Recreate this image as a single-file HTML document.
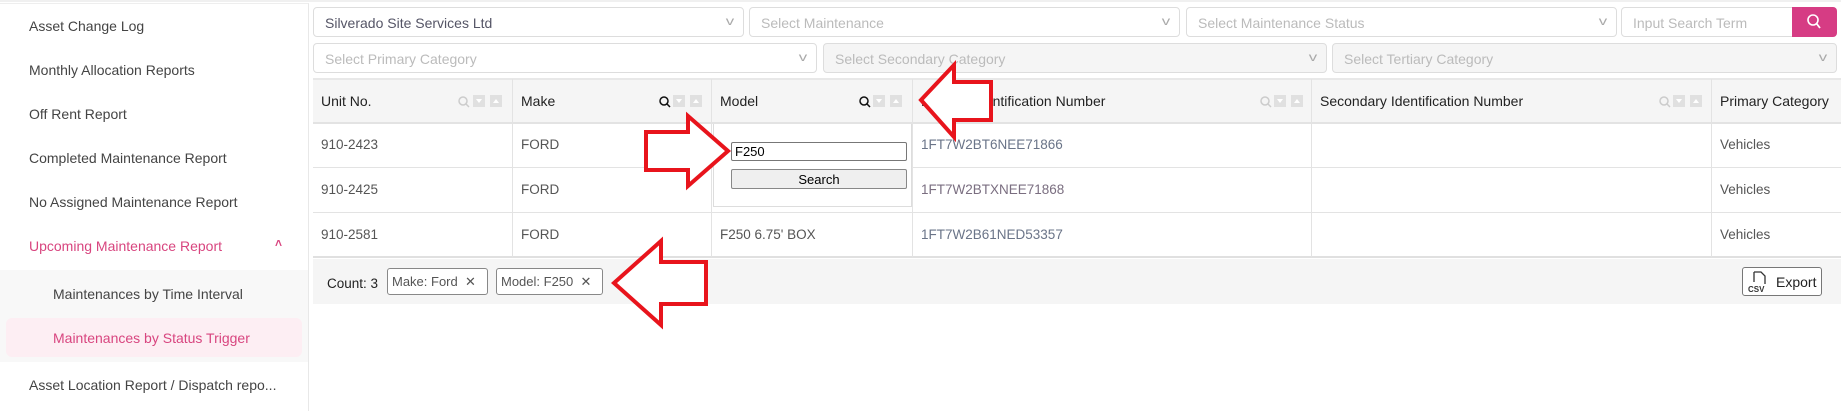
<!DOCTYPE html>
<html><head><meta charset="utf-8"><style>
*{box-sizing:border-box;margin:0;padding:0}
body{width:1841px;height:411px;overflow:hidden;background:#fff;font-family:"Liberation Sans",sans-serif;font-size:14px;color:#333;position:relative}
.a{position:absolute}
.side{left:0;top:3px;width:309px;height:408px;border-right:1px solid #e8e8e8;border-top:1px solid #eee}
.si{position:absolute;left:29px;font-size:14px;color:#444;white-space:nowrap}
.sel{position:absolute;height:30px;border:1px solid #ddd;border-radius:4px;background:#fff;color:#bbb;font-size:14px;padding:7px 11px}
.sel.d{background:#f5f5f5}
.sel .v{position:absolute;right:10px;top:6px;color:#aaa;font-size:12px;transform:scaleX(1.4)}
.th{position:absolute;top:79px;height:44px;border-right:1px solid #e3e3e3;padding:14px 8px;font-size:14px;color:#222;white-space:nowrap;overflow:hidden}
.td{position:absolute;height:45px;border-right:1px solid #e3e3e3;border-bottom:1px solid #e3e3e3;padding:14px 8px;font-size:13.5px;color:#555;white-space:nowrap}
.chip{position:absolute;top:268px;height:27px;border:1px solid #888;border-radius:3px;padding:5px 4px;font-size:13px;color:#555;background:#fff}
</style></head><body>
<div class="a" style="left:0;top:0;width:1841px;height:2px;background:#f0f0f0"></div>
<div class="a side"></div>
<div class="si" style="top:18px">Asset Change Log</div>
<div class="si" style="top:62px">Monthly Allocation Reports</div>
<div class="si" style="top:106px">Off Rent Report</div>
<div class="si" style="top:150px">Completed Maintenance Report</div>
<div class="si" style="top:194px">No Assigned Maintenance Report</div>
<div class="si" style="top:238px;color:#d8457f">Upcoming Maintenance Report</div>
<div class="a" style="left:275px;top:236px;color:#d8457f;font-size:12px;font-weight:bold">&#708;</div>
<div class="a" style="left:0;top:270px;width:308px;height:92px;background:#f8f8f8"></div>
<div class="a" style="left:6px;top:318px;width:296px;height:39px;background:#fdeef3;border-radius:6px"></div>
<div class="si" style="left:53px;top:286px">Maintenances by Time Interval</div>
<div class="si" style="left:53px;top:330px;color:#d8457f">Maintenances by Status Trigger</div>
<div class="si" style="top:377px">Asset Location Report / Dispatch repo...</div>

<div class="sel" style="left:313px;top:7px;width:431px;color:#556">Silverado Site Services Ltd<span class="v">v</span></div>
<div class="sel" style="left:749px;top:7px;width:431px">Select Maintenance<span class="v">v</span></div>
<div class="sel" style="left:1186px;top:7px;width:431px">Select Maintenance Status<span class="v">v</span></div>
<div class="sel" style="left:1621px;top:7px;width:180px;border-radius:4px 0 0 4px">Input Search Term</div>
<div class="a" style="left:1792px;top:7px;width:45px;height:30px;background:#d63c84;border-radius:0 4px 4px 0"><svg width="45" height="30"><circle cx="21" cy="13" r="5" fill="none" stroke="#fff" stroke-width="1.6"/><line x1="24.5" y1="16.5" x2="28" y2="21" stroke="#fff" stroke-width="1.8"/></svg></div>
<div class="sel" style="left:313px;top:43px;width:504px">Select Primary Category<span class="v">v</span></div>
<div class="sel d" style="left:823px;top:43px;width:504px">Select Secondary Category<span class="v">v</span></div>
<div class="sel d" style="left:1332px;top:43px;width:505px">Select Tertiary Category<span class="v">v</span></div>

<div class="a" style="left:313px;top:78px;width:1528px;height:46px;background:#f5f5f5;border-top:2px solid #e8e8e8;border-bottom:2px solid #e3e3e3"></div>
<div class="th" style="left:313px;width:200px">Unit No.</div>
<div class="th" style="left:513px;width:199px">Make</div>
<div class="th" style="left:712px;width:201px">Model</div>
<div class="th" style="left:913px;width:399px">Primary Identification Number</div>
<div class="th" style="left:1312px;width:400px">Secondary Identification Number</div>
<div class="th" style="left:1712px;width:129px;border:none">Primary Category</div>
<svg class="a" style="left:313px;top:79px" width="1528" height="44">
<g fill="none" stroke-width="1.5">
<g stroke="#ccc"><circle cx="150" cy="22" r="4"/><line x1="153" y1="25" x2="156" y2="28"/></g>
<g stroke="#111"><circle cx="351" cy="22" r="4"/><line x1="354" y1="25" x2="357" y2="28"/></g>
<g stroke="#111"><circle cx="551" cy="22" r="4"/><line x1="554" y1="25" x2="557" y2="28"/></g>
<g stroke="#ccc"><circle cx="952" cy="22" r="4"/><line x1="955" y1="25" x2="958" y2="28"/></g>
<g stroke="#ccc"><circle cx="1351" cy="22" r="4"/><line x1="1354" y1="25" x2="1357" y2="28"/></g>
</g>
<g fill="#e0e0e0">
<rect x="160" y="16" width="12" height="12"/><rect x="177" y="16" width="12" height="12"/>
<rect x="360" y="16" width="12" height="12"/><rect x="377" y="16" width="12" height="12"/>
<rect x="560" y="16" width="12" height="12"/><rect x="577" y="16" width="12" height="12"/>
<rect x="961" y="16" width="12" height="12"/><rect x="978" y="16" width="12" height="12"/>
<rect x="1360" y="16" width="12" height="12"/><rect x="1377" y="16" width="12" height="12"/>
</g>
<g fill="#fff">
<path d="M163 20h6l-3 4z M180 24h6l-3-4z M363 20h6l-3 4z M380 24h6l-3-4z M563 20h6l-3 4z M580 24h6l-3-4z M964 20h6l-3 4z M981 24h6l-3-4z M1363 20h6l-3 4z M1380 24h6l-3-4z"/>
</g></svg>

<div class="td" style="left:313px;top:123px;width:200px">910-2423</div>
<div class="td" style="left:513px;top:123px;width:199px">FORD</div>
<div class="td" style="left:712px;top:123px;width:201px"></div>
<div class="td" style="left:913px;top:123px;width:399px;color:#6a7488">1FT7W2BT6NEE71866</div>
<div class="td" style="left:1312px;top:123px;width:400px"></div>
<div class="td" style="left:1712px;top:123px;width:129px;border-right:none">Vehicles</div>
<div class="td" style="left:313px;top:168px;width:200px">910-2425</div>
<div class="td" style="left:513px;top:168px;width:199px">FORD</div>
<div class="td" style="left:712px;top:168px;width:201px"></div>
<div class="td" style="left:913px;top:168px;width:399px;color:#7a6e80">1FT7W2BTXNEE71868</div>
<div class="td" style="left:1312px;top:168px;width:400px"></div>
<div class="td" style="left:1712px;top:168px;width:129px;border-right:none">Vehicles</div>
<div class="td" style="left:313px;top:213px;width:200px;border-bottom:2px solid #e0e0e0">910-2581</div>
<div class="td" style="left:513px;top:213px;width:199px;border-bottom:2px solid #e0e0e0">FORD</div>
<div class="td" style="left:712px;top:213px;width:201px;border-bottom:2px solid #e0e0e0">F250 6.75' BOX</div>
<div class="td" style="left:913px;top:213px;width:399px;border-bottom:2px solid #e0e0e0;color:#6a7488">1FT7W2B61NED53357</div>
<div class="td" style="left:1312px;top:213px;width:400px;border-bottom:2px solid #e0e0e0"></div>
<div class="td" style="left:1712px;top:213px;width:129px;border-right:none;border-bottom:2px solid #e0e0e0">Vehicles</div>

<div class="a" style="left:713px;top:124px;width:199px;height:83px;background:#fff;border:1px solid #ddd;border-top:none"></div>
<div class="a" style="left:731px;top:142px;width:176px;height:19px;border:1px solid #777;border-radius:2px;font-size:13px;padding:1px 3px;color:#000">F250</div>
<div class="a" style="left:731px;top:169px;width:176px;height:20px;border:1px solid #888;border-radius:2px;background:#efefef;font-size:13px;text-align:center;padding-top:2px;color:#000">Search</div>

<div class="a" style="left:313px;top:259px;width:1528px;height:45px;background:#f5f5f5"></div>
<div class="a" style="left:327px;top:276px;font-size:13.5px;color:#222">Count: 3</div>
<div class="chip" style="left:387px;width:101px">Make: Ford&nbsp; ✕</div>
<div class="chip" style="left:496px;width:107px">Model: F250&nbsp; ✕</div>
<div class="a" style="left:1742px;top:267px;width:80px;height:29px;border:1px solid #777;border-radius:3px;background:#fff;font-size:14px;padding:6px 0 0 33px;color:#222">Export</div>
<svg class="a" style="left:1748px;top:270px" width="22" height="24"><path d="M6 2h7l4 4v8" fill="none" stroke="#333" stroke-width="1.3"/><path d="M6 2v10" stroke="#333" stroke-width="1.3"/><text x="0" y="22" font-size="8" font-family="Liberation Sans" font-weight="bold" fill="#333">CSV</text></svg>

<svg class="a" style="left:0;top:0" width="1841" height="411">
<g fill="#fff" stroke="#e8141c" stroke-width="4" stroke-linejoin="miter">
<path d="M646 132 H688 V116 L728 151 L688 186 V170 H646 Z"/>
<path d="M921 100 L954 65 V82 H991 V120 H954 V137 Z"/>
<path d="M614 283 L661 241 V262 H706 V304 H661 V325 Z"/>
</g></svg>
</body></html>
